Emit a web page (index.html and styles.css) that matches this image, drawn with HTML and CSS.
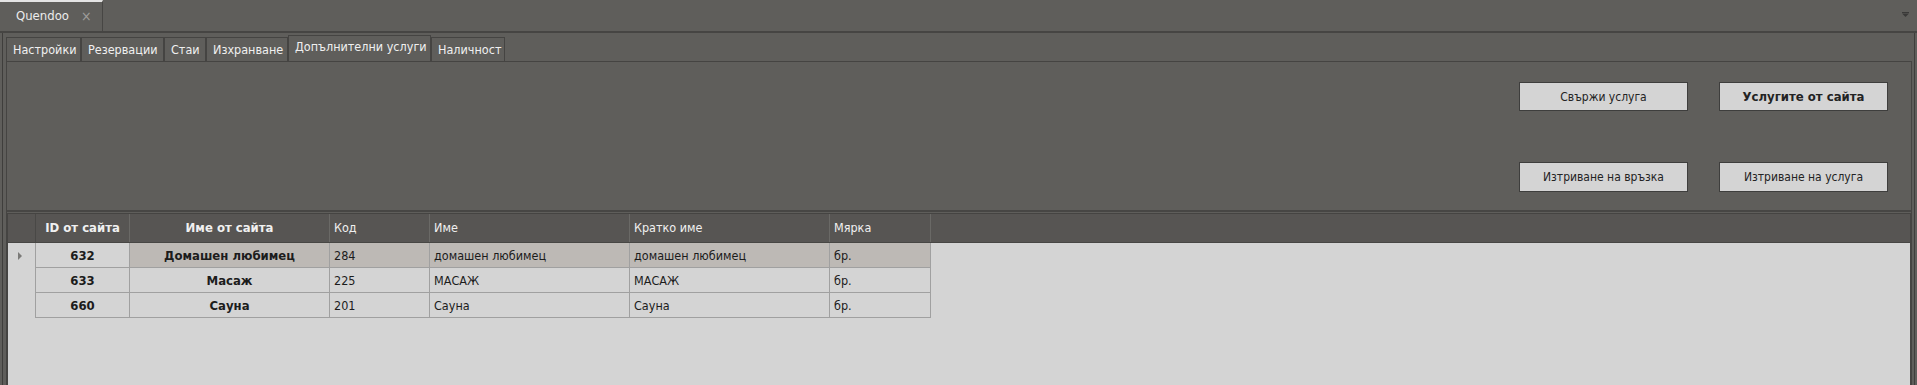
FILE: index.html
```html
<!DOCTYPE html>
<html lang="bg">
<head>
<meta charset="utf-8">
<title>Quendoo</title>
<link rel="stylesheet" href="styles.css">
</head>
<body>
<div class="doc-bar">
  <div class="doc-tab"><span class="doc-title">Quendoo</span><span class="doc-close">×</span></div>
  <div class="doc-menu">
    <svg width="7" height="5" viewBox="0 0 7 5"><rect x="0" y="0" width="7" height="1" fill="#3a3938"/><path d="M0 1.5 H7 L3.5 5 Z" fill="#3a3938"/></svg>
  </div>
</div>
<div class="doc-body">
  <div class="tabs">
    <div class="tab t1">Настройки</div>
    <div class="tab t2">Резервации</div>
    <div class="tab t3">Стаи</div>
    <div class="tab t4">Изхранване</div>
    <div class="tab t5 active">Допълнителни услуги</div>
    <div class="tab t6">Наличност</div>
  </div>
  <div class="tab-page">
    <div class="top-panel">
      <button class="btn">Свържи услуга</button>
      <button class="btn bold">Услугите от сайта</button>
      <button class="btn">Изтриване на връзка</button>
      <button class="btn">Изтриване на услуга</button>
    </div>
    <div class="grid">
      <div class="grow head">
        <div class="cell rh"></div>
        <div class="cell c-id center bold">ID от сайта</div>
        <div class="cell c-name center bold">Име от сайта</div>
        <div class="cell c-code">Код</div>
        <div class="cell c-nm">Име</div>
        <div class="cell c-short">Кратко име</div>
        <div class="cell c-unit">Мярка</div>
      </div>
      <div class="grow row selected">
        <div class="cell rh"><span class="arrow"></span></div>
        <div class="cell c-id center bold">632</div>
        <div class="cell c-name center bold sel">Домашен любимец</div>
        <div class="cell c-code sel">284</div>
        <div class="cell c-nm sel">домашен любимец</div>
        <div class="cell c-short sel">домашен любимец</div>
        <div class="cell c-unit sel">бр.</div>
      </div>
      <div class="grow row">
        <div class="cell rh"></div>
        <div class="cell c-id center bold">633</div>
        <div class="cell c-name center bold">Масаж</div>
        <div class="cell c-code">225</div>
        <div class="cell c-nm">МАСАЖ</div>
        <div class="cell c-short">МАСАЖ</div>
        <div class="cell c-unit">бр.</div>
      </div>
      <div class="grow row">
        <div class="cell rh"></div>
        <div class="cell c-id center bold">660</div>
        <div class="cell c-name center bold">Сауна</div>
        <div class="cell c-code">201</div>
        <div class="cell c-nm">Сауна</div>
        <div class="cell c-short">Сауна</div>
        <div class="cell c-unit">бр.</div>
      </div>
    </div>
  </div>
</div>
</body>
</html>
```
FILE: styles.css
```css
* { box-sizing: border-box; }
html, body { margin: 0; padding: 0; }
body {
  width: 1917px;
  height: 385px;
  overflow: hidden;
  background: #5f5e5b;
  font-family: "DejaVu Sans Condensed", "DejaVu Sans", Tahoma, sans-serif;
  font-stretch: condensed;
  font-size: 12.5px;
  color: #1c1c1c;
}

/* document tab bar */
.doc-bar {
  height: 33px;
  border-bottom: 2px solid #464543;
  display: flex;
  justify-content: space-between;
  align-items: stretch;
}
.doc-tab {
  width: 103px;
  border-top: 2px solid #e4e4e4;
  border-right: 1px solid #474644;
  display: flex;
  align-items: center;
  padding-left: 16px;
  padding-bottom: 2px;
  color: #ececec;
  font-size: 13px;
}
.doc-close {
  margin-left: 12px;
  color: #a09f9c;
  font-size: 14px;
}
.doc-menu {
  width: 14px;
  margin-right: 5px;
  display: flex;
  align-items: center;
  justify-content: center;
  padding-bottom: 2px;
}

/* body with inner tabs */
.doc-body {
  margin: 0 2px;
  height: 352px;
  border-left: 1px solid #3f3e3c;
  border-right: 1px solid #3f3e3c;
}
.tabs {
  height: 28px;
  padding-left: 3px;
  display: flex;
  align-items: flex-end;
}
.tab {
  height: 24px;
  border: 1px solid #454442;
  border-bottom: none;
  color: #f0f0f0;
  display: flex;
  align-items: center;
  padding: 0 0 1px 6px;
  white-space: nowrap;
  font-size: 12.5px;
}
.tab.active { height: 26px; padding-bottom: 4px; }
.t1 { width: 75px; }
.t2 { width: 83px; }
.t3 { width: 42px; }
.t4 { width: 82px; }
.t5 { width: 143px; }
.t6 { width: 74px; }

.tab-page {
  margin: 0 2px 0 3px;
  height: 324px;
  border: 1px solid #454442;
  border-bottom: none;
  display: flex;
  flex-direction: column;
}

/* buttons panel */
.top-panel {
  height: 150px;
  flex: none;
  border-bottom: 2px solid #474644;
  display: grid;
  grid-template-columns: 169px 169px;
  grid-template-rows: 29px 30px;
  column-gap: 31px;
  row-gap: 51px;
  justify-content: end;
  padding: 20px 23px 0 0;
}
.btn {
  margin: 0;
  background: #d4d4d4;
  border: 1px solid #3e3e3d;
  color: #232323;
  font-family: inherit;
  font-stretch: condensed;
  font-size: 12px;
  padding: 0;
  text-align: center;
}
.btn.bold { font-weight: bold; font-size: 13px; }

/* data grid */
.grid {
  flex: 1;
  margin-top: 1px;
  border: 1px solid #454442;
  border-bottom: none;
  background: #d4d4d4;
}
.grow { display: flex; }
.head {
  height: 29px;
  background: #575553;
  border-bottom: 1px solid #474644;
  color: #f0f0f0;
}
.cell {
  flex: none;
  height: 100%;
  display: flex;
  align-items: center;
  padding-left: 4px;
  white-space: nowrap;
  border-right: 1px solid #a0a0a0;
}
.head .cell { border-right: 1px solid #6a6966; padding-bottom: 1px; }
.head .cell.rh { border-right-color: #494846; }
.row { height: 25px; }
.row .cell { border-bottom: 1px solid #a0a0a0; }
.row .cell.rh { border-bottom: none; border-right: 1px solid #a0a0a0; justify-content: center; padding: 0 3px 0 0; }
.center { justify-content: center; padding-left: 0; }
.bold { font-weight: bold; font-size: 13px; }
.sel { background: #bdb9b5; }

.rh { width: 28px; }
.c-id { width: 94px; }
.c-name { width: 200px; }
.c-code { width: 100px; }
.c-nm { width: 200px; }
.c-short { width: 200px; }
.c-unit { width: 101px; }

.arrow {
  width: 0;
  height: 0;
  border-top: 4px solid transparent;
  border-bottom: 4px solid transparent;
  border-left: 4px solid #7b7a78;
}
```
